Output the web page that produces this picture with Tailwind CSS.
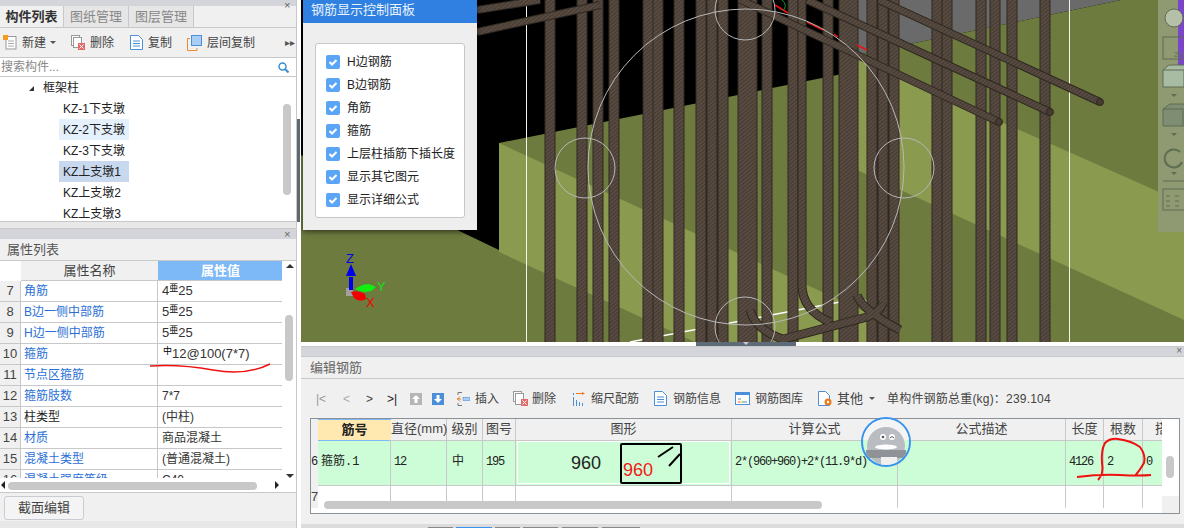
<!DOCTYPE html>
<html lang="zh-CN">
<head>
  <meta charset="utf-8" />
  <title>编辑钢筋</title>
  <script src="https://cdn.jsdelivr.net/npm/@tailwindcss/browser@4"></script>
</head>
<body class="w-[1184px] h-[528px] overflow-hidden flex bg-white text-[12px] text-[#333] font-['Liberation_Sans','Noto_Sans_CJK_SC',sans-serif]">
  <!-- Left column -->
  <aside class="w-[297px] h-[528px] flex flex-col shrink-0 border-r border-[#c8c8c8] bg-[#e8e8e8]">
    <div class="h-[6px] bg-[#d3d5da]"></div>
    <!-- tabs -->
    <div class="h-[22px] flex bg-[#f0f0f0] border-b border-[#c8c8c8] text-[13px] leading-[21px]">
      <div class="w-[64px] text-center font-bold text-[#333] border-r border-[#c8c8c8]">构件列表</div>
      <div class="w-[65px] text-center text-[#888] bg-[#e6e6e6] border-r border-[#c8c8c8]">图纸管理</div>
      <div class="w-[65px] text-center text-[#888] bg-[#e6e6e6] border-r border-[#c8c8c8]">图层管理</div>
    </div>
    <!-- toolbar -->
    <div class="h-[30px] flex items-center bg-[#f0f0f0] border-b border-[#c8c8c8] pl-[3px] text-[#444]">
      <svg class="w-[15px] h-[15px] shrink-0" viewBox="0 0 15 15"><rect x="3" y="1.500" width="10" height="12.500" fill="#fff" stroke="#999"/><path d="M5 6h6M5 8.500h6M5 11h6" stroke="#aaa"/><rect x="0" y="0" width="5" height="5" fill="#f59a23"/></svg>
      <span class="ml-[4px] w-[28px]">新建</span>
      <span class="w-0 h-0 border-x-[3px] border-x-transparent border-t-[3px] border-t-[#555]"></span>
      <svg class="ml-[15px] w-[14px] h-[15px] shrink-0" viewBox="0 0 14 15"><rect x="0.500" y="0.500" width="8" height="10" fill="#fff" stroke="#999"/><rect x="2.500" y="2.500" width="8" height="10" fill="#fff" stroke="#999"/><rect x="7" y="8" width="7" height="7" fill="#e46a6a"/><path d="M8.500 9.500l4 4m0-4l-4 4" stroke="#fff"/></svg>
      <span class="ml-[5px] w-[40px]">删除</span>
      <svg class="w-[13px] h-[15px] shrink-0" viewBox="0 0 13 15"><path d="M.5.500h8l4 4v10H.5z" fill="#fff" stroke="#4a8fd8"/><path d="M3 6h7M3 8.500h7M3 11h7" stroke="#4a8fd8"/></svg>
      <span class="ml-[5px] w-[39px]">复制</span>
      <svg class="w-[15px] h-[16px] shrink-0" viewBox="0 0 15 16"><path d="M3 3.500H.5v12H10V13" fill="none" stroke="#ef8a2e"/><rect x="4.500" y=".5" width="10" height="10" fill="#a9cdf7" stroke="#4a8fd8"/></svg>
      <span class="ml-[5px]">层间复制</span>
      <span class="ml-auto mr-[1px] text-[10px] text-[#555]">▸▸</span>
    </div>
    <!-- search -->
    <div class="h-[19px] flex items-center justify-between bg-white border-b border-[#c8c8c8] pl-[1px] pr-[7px] text-[#888]">
      <span>搜索构件...</span>
      <svg class="w-[11px] h-[11px]" viewBox="0 0 11 11"><circle cx="4.500" cy="4.500" r="3.500" fill="none" stroke="#3d8fd0" stroke-width="1.500"/><path d="M7 7l3.500 3.500" stroke="#3d8fd0" stroke-width="2"/></svg>
    </div>
    <!-- tree -->
    <div class="relative h-[145px] bg-white border-b border-[#c8c8c8] overflow-hidden text-[#222] leading-[23px]">
      <div class="flex items-center h-[21px] pl-[29px] pt-[1px]"><span class="w-0 h-0 border-l-[5px] border-l-transparent border-b-[5px] border-b-[#333] mr-[9px]"></span>框架柱</div>
      <div class="h-[21px] ml-[59px] w-[70px] pl-[4px]">KZ-1下支墩</div>
      <div class="h-[21px] ml-[59px] w-[70px] pl-[4px] bg-[#e4f0fb]">KZ-2下支墩</div>
      <div class="h-[21px] ml-[59px] w-[70px] pl-[4px]">KZ-3下支墩</div>
      <div class="h-[21px] ml-[59px] w-[70px] pl-[4px] bg-[#c8d9ef]">KZ上支墩1</div>
      <div class="h-[21px] ml-[59px] w-[70px] pl-[4px]">KZ上支墩2</div>
      <div class="h-[21px] ml-[59px] w-[70px] pl-[4px]">KZ上支墩3</div>
      <div class="absolute left-[283px] top-[27px] w-[8px] h-[91px] rounded-full bg-[#c8c8c8]"></div>
    </div>
    <div class="h-[6px]"></div>
    <!-- properties -->
    <div class="h-[11px] bg-[#d3d5da] border-t border-[#c8c8c8]"></div>
    <div class="h-[22px] pl-[7px] leading-[21px] text-[13px] text-[#555] bg-[#f0f0f0] border-b border-[#c8c8c8]">属性列表</div>
    <div class="relative h-[217px] bg-white overflow-hidden">
      <div class="grid grid-cols-[21px_137px_125px] h-[20px] leading-[19px] text-[13px]">
        <div class="bg-white"></div>
        <div class="bg-[#f0f0f0] text-center text-[#444] border-b border-[#c8c8c8]">属性名称</div>
        <div class="bg-[#7db8f7] text-center text-white font-bold border-b border-[#c8c8c8]">属性值</div>
      </div>
      <div class="w-[283px] grid grid-cols-[21px_137px_125px] auto-rows-[21px] leading-[20px] text-[#2b6fd6]">
        <div class="bg-[#f0f0f0] text-center text-[13px] text-[#444] border-b border-r border-[#c8c8c8]">7</div><div class="pl-[3px] border-b border-r border-[#c8c8c8]">角筋</div><div class="pl-[4px] text-[#333] border-b border-[#c8c8c8] text-[13px]">4<sup class="text-[9px] text-black">亜</sup>25</div>
        <div class="bg-[#f0f0f0] text-center text-[13px] text-[#444] border-b border-r border-[#c8c8c8]">8</div><div class="pl-[3px] border-b border-r border-[#c8c8c8]">B边一侧中部筋</div><div class="pl-[4px] text-[#333] border-b border-[#c8c8c8] text-[13px]">5<sup class="text-[9px] text-black">亜</sup>25</div>
        <div class="bg-[#f0f0f0] text-center text-[13px] text-[#444] border-b border-r border-[#c8c8c8]">9</div><div class="pl-[3px] border-b border-r border-[#c8c8c8]">H边一侧中部筋</div><div class="pl-[4px] text-[#333] border-b border-[#c8c8c8] text-[13px]">5<sup class="text-[9px] text-black">亜</sup>25</div>
        <div class="bg-[#f0f0f0] text-center text-[13px] text-[#444] border-b border-r border-[#c8c8c8]">10</div><div class="pl-[3px] border-b border-r border-[#c8c8c8]">箍筋</div><div class="pl-[5px] text-[#333] border-b border-[#c8c8c8] text-[13px]"><sup class="text-[9px] text-black">中</sup>12@100(7*7)</div>
        <div class="bg-[#f0f0f0] text-center text-[13px] text-[#444] border-b border-r border-[#c8c8c8]">11</div><div class="pl-[3px] border-b border-r border-[#c8c8c8]">节点区箍筋</div><div class="border-b border-[#c8c8c8]"></div>
        <div class="bg-[#f0f0f0] text-center text-[13px] text-[#444] border-b border-r border-[#c8c8c8]">12</div><div class="pl-[3px] border-b border-r border-[#c8c8c8]">箍筋肢数</div><div class="pl-[4px] text-[#333] border-b border-[#c8c8c8]">7*7</div>
        <div class="bg-[#f0f0f0] text-center text-[13px] text-[#444] border-b border-r border-[#c8c8c8]">13</div><div class="pl-[3px] text-[#222] border-b border-r border-[#c8c8c8]">柱类型</div><div class="pl-[4px] text-[#333] border-b border-[#c8c8c8]">(中柱)</div>
        <div class="bg-[#f0f0f0] text-center text-[13px] text-[#444] border-b border-r border-[#c8c8c8]">14</div><div class="pl-[3px] border-b border-r border-[#c8c8c8]">材质</div><div class="pl-[4px] text-[#333] border-b border-[#c8c8c8]">商品混凝土</div>
        <div class="bg-[#f0f0f0] text-center text-[13px] text-[#444] border-b border-r border-[#c8c8c8]">15</div><div class="pl-[3px] border-b border-r border-[#c8c8c8]">混凝土类型</div><div class="pl-[4px] text-[#333] border-b border-[#c8c8c8]">(普通混凝土)</div>
        <div class="bg-[#f0f0f0] text-center text-[13px] text-[#444] border-r border-[#c8c8c8]">16</div><div class="pl-[3px] border-r border-[#c8c8c8]">混凝土强度等级</div><div class="pl-[4px] text-[#333]">C40</div>
      </div>
      <!-- scrollbars -->
      <div class="absolute left-[282px] top-0 w-[14px] h-[217px] bg-white"></div>
      <div class="absolute left-[286px] top-[3px] w-0 h-0 border-x-[4px] border-x-transparent border-b-[4px] border-b-[#333]"></div>
      <div class="absolute left-[285px] top-[54px] w-[8px] h-[66px] rounded-full bg-[#c8c8c8]"></div>
      <div class="absolute left-[286px] top-[213px] w-0 h-0 border-x-[4px] border-x-transparent border-t-[4px] border-t-[#333]"></div>
    </div>
    <div class="relative h-[15px] bg-white border-b border-[#c8c8c8]">
      <div class="absolute left-[1px] top-[3px] w-0 h-0 border-y-[4px] border-y-transparent border-r-[4px] border-r-[#222]"></div>
      <div class="absolute left-[8px] top-[4px] w-[249px] h-[8px] rounded-full bg-[#c8c8c8]"></div>
      <div class="absolute left-[275px] top-[3px] w-0 h-0 border-y-[4px] border-y-transparent border-l-[4px] border-l-[#222]"></div>
    </div>
    <div class="h-[28px] bg-[#f0f0f0] pl-[4px] pt-[3px]">
      <div class="w-[80px] h-[24px] leading-[22px] text-center text-[13px] text-[#444] bg-[#f4f4f4] border border-[#c8ccd2] rounded-[3px]">截面编辑</div>
    </div>
  </aside>

  <!-- splitter -->
  <div class="w-[4px] h-[528px] shrink-0 bg-white">
    <div class="mt-[119px] w-[3px] h-[103px] bg-[#5e6870]"></div>
  </div>

  <!-- Right column -->
  <main class="w-[883px] h-[528px] flex flex-col shrink-0 bg-[#e8e8e8]">
    <!-- 3D scene -->
    <div class="relative h-[342px] overflow-hidden bg-black">
      <svg class="absolute left-0 top-0" width="883" height="342" viewBox="301 0 883 342">
        <defs>
          <pattern id="rope" width="3" height="3" patternUnits="userSpaceOnUse" patternTransform="rotate(-40)">
            <rect width="3" height="3" fill="#564a41"/>
            <rect width="3" height="1" fill="#463b32"/>
          </pattern>
          <path id="v" d="M550 0V342M582 0V342M598 0V342M614 0V342M648 0V342M658 0V342M679 0V342M701 0V342M712 0V342M723 0V342M743 0V342M752 0V342M767 0V342M793 0V342M828 0V342M844 0V342M853 0V342M872 0V342M883 0V342M894 0V342M937 0V342M947 0V342M981 0V342M995 0V342M1012 0V342M1045 0V342"/>
          <path id="b" d="M802 0V285Q802 310 830 322M883 303Q880 312 867 317L780 340M750 310Q755 330 785 340M857 295Q862 310 900 330"/>
          <path id="d" d="M741 0L999 122M807 0L1050 112M879 0L1100 102M477 32L600 5M477 10L540 0"/>
        </defs>
        <polygon points="857,0 1121,0 857,55" fill="#6a6a6a"/>
        <polygon points="301,155 499,250 499,143 857,71 857,55 1121,0 1184,0 1184,342 301,342" fill="#6d7b3f"/>
        <polygon points="499,143 857,308 900,330 900,342 695,342 499,252" fill="#8a9a4e"/>
        <polygon points="857,58 1184,203 1184,320 857,170" fill="#8a9a4e"/>
        <!-- white lines -->
        <g stroke="#fff" fill="none">
          <path d="M526.500 0V342M738.500 0V342M1069.500 0V342" stroke="#f4f4ea"/>
          <path d="M857.500 0V290M823.500 60V300M879.500 0V305" stroke="#c9c9c9"/>
          <path d="M630 342L840 302M860 298L890 313" stroke-width="1.500"/>
        </g>
        <!-- rebar -->
        <g fill="none">
          <use href="#v" stroke="#2f2820" stroke-width="11"/>
          <use href="#v" stroke="url(#rope)" stroke-width="9"/>
          <use href="#b" stroke="#2f2820" stroke-width="9"/>
          <use href="#b" stroke="url(#rope)" stroke-width="7"/>
          <use href="#d" stroke="#2f2820" stroke-width="8"/>
          <use href="#d" stroke="url(#rope)" stroke-width="6"/>
        </g>
        <g fill="#463b32" stroke="#2f2820">
          <circle cx="999" cy="122" r="3.500"/><circle cx="1050" cy="112" r="3.500"/><circle cx="1100" cy="102" r="3.500"/>
        </g>
        <!-- red and green marks -->
        <path d="M775 5L788 13M807 22L823 30M834 34L838 37M857 45L867 50" stroke="#f01010" stroke-width="1.500"/>
        <path d="M782 0Q788 5 783 11" stroke="#0a9a2a" fill="none"/>
        <!-- circles -->
        <g fill="none" stroke="#b8b8b8">
          <circle cx="746" cy="167" r="158"/>
          <circle cx="745" cy="10" r="30"/>
          <circle cx="904" cy="168" r="30"/>
          <circle cx="585" cy="168" r="30"/>
          <circle cx="745" cy="327" r="30"/>
        </g>
        <!-- axis -->
        <rect x="346" y="288" width="7" height="8" fill="#a0a0a0"/>
        <path d="M349 277h4v13h-4zM351 264l-5 12h10z" fill="#0000f0"/>
        <path d="M355 289Q362 284 369 284L376 287Q370 294 360 291z" fill="#10f010"/>
        <path d="M351 292Q358 290 365 294L366 299Q360 303 354 298z" fill="#f00000"/>
        <text x="346" y="263" font-size="13" fill="#0000f0">Z</text>
        <text x="377" y="291" font-size="13" fill="#10e010">Y</text>
        <text x="366" y="307" font-size="13" fill="#f00000">X</text>
        <!-- view toolbar -->
        <rect x="1158" y="0" width="26" height="232" fill="#8f9a72"/>
        <rect x="1178" y="0" width="6" height="80" fill="#7a45c8"/>
        <g fill="none" stroke="#5f6d52">
          <circle cx="1174" cy="18" r="9" fill="#b5c0a8"/>
          <rect x="1163" y="37" width="24" height="22"/>
          <path d="M1163 70l6-5h18v22h-24zM1163 70h21v17" fill="#a8bca4"/>
          <path d="M1163 109l7-5h17v22h-24zM1163 109h20v17" fill="#7f8d73"/>
          <path d="M1180 152a9 9 0 1 0 2 10" stroke-width="2"/>
          <path d="M1163 181h21"/>
          <rect x="1163" y="189" width="24" height="21"/>
          <path d="M1166 196h4M1166 201h4M1166 206h4M1175 196h4M1175 201h4M1175 206h4"/>
        </g>
        <path d="M1171 94h6l-3 3zM1171 133h6l-3 3zM1171 172h6l-3 3z" fill="#5f6d52"/>
        <text x="1174" y="57" font-size="8" fill="#5f6d52">2D</text>
      </svg>
      <!-- control panel -->
      <div class="absolute left-[2px] top-0 w-[174px] h-[230px] bg-[#eeeeee] shadow-[0_2px_5px_rgba(0,0,0,0.5)]">
        <div class="h-[23px] pl-[8px] leading-[20px] text-[13px] text-white/90 bg-[#2f80e0]">钢筋显示控制面板</div>
        <div class="mt-[20px] ml-[12px] w-[150px] h-[175px] pt-[6px] bg-white border border-[#c8c8c8] rounded-[3px] text-[#222]">
          <div class="flex items-center h-[23px] pl-[10px] gap-[7px]"><svg class="w-[14px] h-[14px]" viewBox="0 0 14 14"><rect width="14" height="14" rx="2" fill="#5aa5f5"/><path d="M3.500 7l2.500 2.500 4.500-4.500" stroke="#fff" stroke-width="2" fill="none"/></svg>H边钢筋</div>
          <div class="flex items-center h-[23px] pl-[10px] gap-[7px]"><svg class="w-[14px] h-[14px]" viewBox="0 0 14 14"><rect width="14" height="14" rx="2" fill="#5aa5f5"/><path d="M3.500 7l2.500 2.500 4.500-4.500" stroke="#fff" stroke-width="2" fill="none"/></svg>B边钢筋</div>
          <div class="flex items-center h-[23px] pl-[10px] gap-[7px]"><svg class="w-[14px] h-[14px]" viewBox="0 0 14 14"><rect width="14" height="14" rx="2" fill="#5aa5f5"/><path d="M3.500 7l2.500 2.500 4.500-4.500" stroke="#fff" stroke-width="2" fill="none"/></svg>角筋</div>
          <div class="flex items-center h-[23px] pl-[10px] gap-[7px]"><svg class="w-[14px] h-[14px]" viewBox="0 0 14 14"><rect width="14" height="14" rx="2" fill="#5aa5f5"/><path d="M3.500 7l2.500 2.500 4.500-4.500" stroke="#fff" stroke-width="2" fill="none"/></svg>箍筋</div>
          <div class="flex items-center h-[23px] pl-[10px] gap-[7px]"><svg class="w-[14px] h-[14px]" viewBox="0 0 14 14"><rect width="14" height="14" rx="2" fill="#5aa5f5"/><path d="M3.500 7l2.500 2.500 4.500-4.500" stroke="#fff" stroke-width="2" fill="none"/></svg>上层柱插筋下插长度</div>
          <div class="flex items-center h-[23px] pl-[10px] gap-[7px]"><svg class="w-[14px] h-[14px]" viewBox="0 0 14 14"><rect width="14" height="14" rx="2" fill="#5aa5f5"/><path d="M3.500 7l2.500 2.500 4.500-4.500" stroke="#fff" stroke-width="2" fill="none"/></svg>显示其它图元</div>
          <div class="flex items-center h-[23px] pl-[10px] gap-[7px]"><svg class="w-[14px] h-[14px]" viewBox="0 0 14 14"><rect width="14" height="14" rx="2" fill="#5aa5f5"/><path d="M3.500 7l2.500 2.500 4.500-4.500" stroke="#fff" stroke-width="2" fill="none"/></svg>显示详细公式</div>
        </div>
      </div>
    </div>
    <!-- splitter handle -->
    <div class="h-[4px] bg-white">
      <div class="ml-[395px] w-[100px] h-[4px] bg-[#5e6b78]"></div>
    </div>
    <div class="h-[11px] bg-[#d3d5da] border-y border-[#c8c8c8] text-right text-[10px] leading-[8px] pr-[2px] text-[#666]">×</div>
    <div class="h-[22px] pl-[9px] leading-[21px] text-[13px] text-[#666] bg-[#f0f0f0] border-b border-[#c8c8c8]">编辑钢筋</div>
    <div class="flex-1 pl-[9px] pr-[4px] bg-[#f0f0f0]">
      <!-- steel toolbar -->
      <div class="h-[39px] flex items-center text-[#444]">
        <span class="w-[25px] pl-[6px] text-[#999]">|&lt;</span>
        <span class="w-[24px] pl-[8px] text-[#aaa]">&lt;</span>
        <span class="w-[20px] pl-[7px]">&gt;</span>
        <span class="w-[31px] pl-[8px] text-[#222]">&gt;|</span>
        <svg class="w-[12px] h-[12px] shrink-0" viewBox="0 0 12 12"><rect width="12" height="12" fill="#b5b5b5"/><path d="M6 2L2 6h2.500v4h3V6H10z" fill="#fff"/></svg>
        <svg class="ml-[10px] w-[12px] h-[12px] shrink-0" viewBox="0 0 12 12"><rect width="12" height="12" fill="#4a8fd8"/><path d="M6 10l4-4H7.500V2h-3v4H2z" fill="#fff"/></svg>
        <svg class="ml-[13px] w-[13px] h-[14px] shrink-0" viewBox="0 0 13 14"><path d="M1 3V.5h4M1 11v2.500h4" stroke="#777" fill="none"/><path d="M0 7h4M3 4.500L.5 7 3 9.500" stroke="#ef7a1e" fill="none"/><rect x="6" y="5.500" width="7" height="3" fill="#a9cdf7" stroke="#4a8fd8" stroke-width=".6"/></svg>
        <span class="ml-[5px] w-[38px]">插入</span>
        <svg class="w-[15px] h-[15px] shrink-0" viewBox="0 0 15 15"><rect x=".5" y=".5" width="8" height="10" fill="#fff" stroke="#999"/><rect x="2.500" y="2.500" width="8" height="11" fill="#fff" stroke="#999"/><rect x="8" y="8" width="7" height="7" fill="#e46a6a"/><path d="M9.500 9.500l4 4m0-4l-4 4" stroke="#fff"/></svg>
        <span class="ml-[4px] w-[41px]">删除</span>
        <svg class="w-[12px] h-[14px] shrink-0" viewBox="0 0 12 14"><path d="M.5 1v2M.5 5v9M3.500 8v6M6.500 10v4M9.500 11v3" stroke="#4a8fd8"/><path d="M3 1.500h7" stroke="#ef7a1e"/><path d="M9 0l3 1.500L9 3z" fill="#ef7a1e"/></svg>
        <span class="ml-[6px] w-[63px]">缩尺配筋</span>
        <svg class="w-[13px] h-[15px] shrink-0" viewBox="0 0 13 15"><path d="M.5.500h8l4 4v10H.5z" fill="#fff" stroke="#4a8fd8"/><path d="M3 6h7M3 8.500h7M3 11h7" stroke="#4a8fd8"/></svg>
        <span class="ml-[6px] w-[62px]">钢筋信息</span>
        <svg class="w-[15px] h-[13px] shrink-0" viewBox="0 0 15 13"><rect x=".5" y=".5" width="14" height="12" fill="#fff" stroke="#4a8fd8"/><path d="M1 1h13v2H1z" fill="#4a8fd8"/><path d="M3 7h3" stroke="#888"/><path d="M3 10h2" stroke="#e44"/><path d="M5 10h2" stroke="#ec3"/><path d="M7 10h2" stroke="#4a4"/><path d="M9 10h3" stroke="#48d"/></svg>
        <span class="ml-[5px] w-[63px]">钢筋图库</span>
        <svg class="w-[14px] h-[15px] shrink-0" viewBox="0 0 14 15"><path d="M.5.500h7l4 4v10H.5z" fill="#fff" stroke="#4a8fd8"/><circle cx="10" cy="11" r="3.500" fill="#ef7a1e"/><circle cx="10" cy="11" r="1.200" fill="#fff"/></svg>
        <span class="ml-[5px] w-[32px] text-[13px]">其他</span>
        <span class="w-0 h-0 border-x-[3px] border-x-transparent border-t-[3px] border-t-[#555]"></span>
        <span class="ml-[12px] tracking-[0.2px]">单构件钢筋总重(kg)：239.104</span>
      </div>
      <!-- grid -->
      <div class="relative w-[870px] h-[96px] bg-white border border-[#8a9298] overflow-hidden">
        <div class="grid grid-cols-[7px_73px_56px_36px_33px_216px_166px_168px_38px_39px_19px] h-[21px] leading-[20px] text-[13px] text-[#444] text-center">
          <div class="bg-[#f0f0f0]"></div>
          <div class="bg-[#ffe9b0] font-bold text-[#222] border-y border-[#7db8f7]">筋号</div>
          <div class="bg-[#f0f0f0] border-r border-b border-[#c8c8c8] whitespace-nowrap">直径(mm)</div>
          <div class="bg-[#f0f0f0] border-r border-b border-[#c8c8c8]">级别</div>
          <div class="bg-[#f0f0f0] border-r border-b border-[#c8c8c8]">图号</div>
          <div class="bg-[#f0f0f0] border-r border-b border-[#c8c8c8]">图形</div>
          <div class="bg-[#f0f0f0] border-r border-b border-[#c8c8c8]">计算公式</div>
          <div class="bg-[#f0f0f0] border-r border-b border-[#c8c8c8]">公式描述</div>
          <div class="bg-[#f0f0f0] border-r border-b border-[#c8c8c8]">长度</div>
          <div class="bg-[#f0f0f0] border-r border-b border-[#c8c8c8]">根数</div>
          <div class="bg-[#f0f0f0] border-b border-[#c8c8c8] overflow-hidden whitespace-nowrap text-left pl-[12px]">搭接</div>
        </div>
        <div class="grid grid-cols-[7px_73px_56px_36px_33px_216px_166px_168px_38px_39px_19px] h-[46px] leading-[45px] text-[#222] font-['Liberation_Mono','Noto_Sans_CJK_SC',monospace] bg-[#ccfdd6]">
          <div class="bg-[#f0f0f0] tracking-[-1.2px]">6</div>
          <div class="pl-[3px] border-r border-b border-[#c8c8c8]">箍筋.1</div>
          <div class="pl-[3px] border-r border-b border-[#c8c8c8] tracking-[-1.2px]">12</div>
          <div class="pl-[5px] border-r border-b border-[#c8c8c8]">中</div>
          <div class="pl-[3px] border-r border-b border-[#c8c8c8] tracking-[-1.2px]">195</div>
          <div class="relative border-r border-b border-[#c8c8c8]">
            <div class="absolute inset-[1px] bg-[#ccfdd6] border border-white"></div>
            <span class="absolute left-[55px] top-[1px] text-[18px] font-['Liberation_Sans',sans-serif]">960</span>
            <div class="absolute left-[104px] top-[3px] w-[62px] h-[41px] border-2 border-black rounded-[2px]">
              <span class="absolute left-[1px] top-[5px] text-[18px] leading-[40px] text-[#f01818] font-['Liberation_Sans',sans-serif]">960</span>
              <svg class="absolute left-0 top-0" width="58" height="37" viewBox="0 0 58 37"><path d="M36 12L51 2M47 21L58 9" stroke="#000" stroke-width="2"/></svg>
            </div>
          </div>
          <div class="pl-[3px] border-r border-b border-[#c8c8c8] whitespace-nowrap tracking-[-1.2px]">2*(960+960)+2*(11.9*d)</div>
          <div class="border-r border-b border-[#c8c8c8]"></div>
          <div class="pl-[3px] border-r border-b border-[#c8c8c8] tracking-[-1.2px]">4126</div>
          <div class="pl-[3px] border-r border-b border-[#c8c8c8]">2</div>
          <div class="pl-[3px] border-b border-[#c8c8c8]">0</div>
        </div>
        <div class="grid grid-cols-[7px_73px_56px_36px_33px_216px_166px_168px_38px_39px_19px] h-[12px] leading-[22px] text-[#444] text-[13px]">
          <div class="bg-[#f0f0f0]">7</div>
          <div class="border-r border-[#c8c8c8]"></div><div class="border-r border-[#c8c8c8]"></div><div class="border-r border-[#c8c8c8]"></div><div class="border-r border-[#c8c8c8]"></div><div class="border-r border-[#c8c8c8]"></div><div class="border-r border-[#c8c8c8]"></div><div class="border-r border-[#c8c8c8]"></div><div class="border-r border-[#c8c8c8]"></div><div class="border-r border-[#c8c8c8]"></div><div></div>
        </div>
        <div class="absolute left-[13px] top-[82px] w-[498px] h-[8px] rounded-full bg-[#c8c8c8]"></div>
        <div class="absolute right-0 top-0 w-[17px] h-[94px] bg-white"></div>
        <div class="absolute right-[5px] top-[37px] w-[8px] h-[22px] rounded-full bg-[#c8c8c8]"></div>
        <div class="absolute right-0 bottom-0 w-[17px] h-[17px] bg-[#f0f0f0]"></div>
      </div>
    </div>
    <div class="h-[4px] bg-[#dcdcdc] flex items-end">
      <div class="ml-[127px] w-[25px] h-[1px] bg-[#888]"></div>
      <div class="ml-[3px] w-[36px] h-[1px] bg-[#3b93f0]"></div>
      <div class="ml-[3px] w-[25px] h-[1px] bg-[#888]"></div>
      <div class="ml-[3px] w-[35px] h-[1px] bg-[#888]"></div>
      <div class="ml-[4px] w-[36px] h-[1px] bg-[#888]"></div>
      <div class="ml-[4px] w-[38px] h-[1px] bg-[#888]"></div>
    </div>
  </main>

  <!-- Overlays: close marks, floating avatar, hand-drawn red annotations -->
  <div class="absolute left-[284px] top-[-3px] text-[11px] text-[#666]">×</div>
  <div class="absolute left-[284px] top-[226px] text-[11px] text-[#666]">×</div>
  <svg class="absolute left-0 top-0 pointer-events-none" width="1184" height="528" viewBox="0 0 1184 528">
    <path d="M743 342l3 3 3-3z" fill="#c8ccd2"/>
    <path d="M150 366Q180 364 213 370T270 364" stroke="#f01010" stroke-width="1.500" fill="none"/>
    <path d="M1077 477Q1100 474 1120 475T1151 475M1098 480Q1104 474 1102 463Q1101 450 1105 443Q1110 438 1118 439Q1132 441 1140 447Q1146 455 1144 463Q1140 470 1135 476" stroke="#f01010" stroke-width="2" fill="none"/>
    <defs><clipPath id="avatar"><circle cx="886" cy="442" r="23"/></clipPath></defs>
    <circle cx="886" cy="442" r="24" fill="#ccfdd6" stroke="#3b93f0" stroke-width="2"/>
    <g clip-path="url(#avatar)">
      <rect x="862" y="418" width="48" height="22" fill="#f4f4f4"/>
      <ellipse cx="886" cy="446" rx="19" ry="19" fill="#b9bcc0"/>
      <rect x="866" y="450" width="40" height="8" fill="#8f9296"/>
      <rect x="881" y="457" width="16" height="10" fill="#f0f0f0"/>
      <ellipse cx="886" cy="447" rx="11" ry="2.500" fill="#fff"/>
      <circle cx="883" cy="437" r="3" fill="#fff"/><circle cx="892" cy="437" r="3" fill="#fff"/>
      <circle cx="883" cy="437" r="1.300" fill="#555"/><path d="M890 438q2-3 4 0" stroke="#555" fill="none"/>
    </g>
  </svg>
</body>
</html>
